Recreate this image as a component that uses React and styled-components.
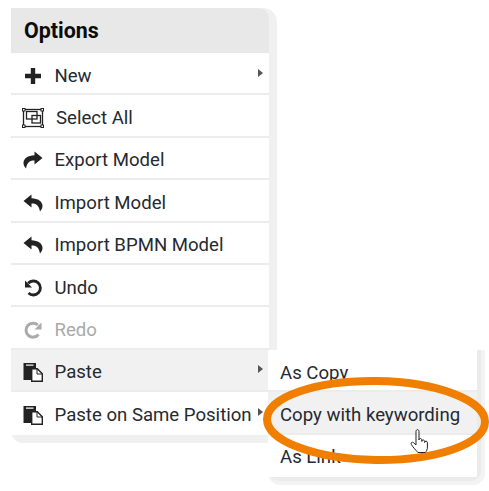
import React from "react";
import styled, { createGlobalStyle } from "styled-components";

const Global = createGlobalStyle`
  html, body { margin: 0; padding: 0; background: #fff; }
  body { font-family: Roboto, "Liberation Sans", sans-serif; }
`;

const Page = styled.div`
  position: relative;
  width: 489px;
  height: 491px;
  padding: 8px 0 0 11px;
  box-sizing: border-box;
  overflow: hidden;
`;

const Menu = styled.div`
  width: 258px;
  background: #fff;
  border-radius: 0 10px 8px 8px;
  box-shadow: 4px 4px 0 4px #f0f0f0;
`;

const Header = styled.div`
  height: 45px;
  display: flex;
  align-items: center;
  padding-left: 13px;
  background: #e8e8e8;
  border-radius: 0 10px 0 0;
  font-size: 21.4px;
  font-weight: 700;
  color: #0c0c0c;
`;

const Row = styled.div`
  position: relative;
  height: 42.4px;
  box-sizing: border-box;
  display: flex;
  align-items: center;
  padding-top: 5px;
  border-bottom: 2px solid ${(p) => (p.$last ? "transparent" : "#ececec")};
  background: ${(p) => (p.$active ? "#f1f1f1" : "#fff")};
  color: ${(p) => (p.$disabled ? "#a9a9a9" : "#252a31")};
  font-size: 18.6px;
`;

const IconSlot = styled.span`
  width: ${(p) => (p.$wide ? "45px" : "43.5px")};
  padding-left: 12px;
  box-sizing: border-box;
  display: flex;
  align-items: center;
  flex: none;
`;

const Caret = styled.span`
  position: absolute;
  right: 6px;
  top: 50%;
  margin-top: -4.500px;
  width: 0;
  height: 0;
  border-left: 5.500px solid #555;
  border-top: 4.500px solid transparent;
  border-bottom: 4.500px solid transparent;
`;

const SubMenu = styled.div`
  position: absolute;
  left: 268px;
  top: 350px;
  width: 209px;
  background: #fff;
  border-radius: 0 0 8px 8px;
  box-shadow: 2px 2px 0 2px #ebebeb, 4px 4px 0 4px #f3f3f3;
`;

const SubRow = styled.div`
  height: 42.4px;
  box-sizing: border-box;
  display: flex;
  align-items: center;
  padding: 5px 0 0 12px;
  border-bottom: 2px solid ${(p) => (p.$last ? "transparent" : "#ececec")};
  background: ${(p) => (p.$active ? "#f1f1f1" : "#fff")};
  color: #252a31;
  font-size: 18.6px;
`;

const Overlay = styled.svg`
  position: absolute;
  left: 0;
  top: 0;
  pointer-events: none;
`;

const Plus = () => (
  <svg width="18" height="18" viewBox="0 0 18 18" style={{ marginLeft: 1 }}>
    <path d="M6.800 1h4.400v5.800H17v4.400h-5.800V17H6.800v-5.800H1V6.800h5.800z" fill="#222" />
  </svg>
);

const SelectAll = () => (
  <svg width="22" height="20" viewBox="0 0 22 20" style={{ marginLeft: -1 }}>
    <rect x="1.500" y="1.500" width="19" height="17" fill="none" stroke="#222" strokeWidth="1.300" />
    <rect x="0.500" y="0.500" width="2.500" height="2.500" fill="#fff" stroke="#222" />
    <rect x="19" y="0.500" width="2.500" height="2.500" fill="#fff" stroke="#222" />
    <rect x="0.500" y="17" width="2.500" height="2.500" fill="#fff" stroke="#222" />
    <rect x="19" y="17" width="2.500" height="2.500" fill="#fff" stroke="#222" />
    <rect x="4.500" y="3.500" width="10.500" height="7.500" fill="none" stroke="#222" strokeWidth="1.300" />
    <rect x="10" y="7.500" width="8.500" height="7.500" fill="none" stroke="#222" strokeWidth="1.300" />
  </svg>
);

const Share = () => (
  <svg width="20" height="20" viewBox="0 0 20 20">
    <path d="M11.500 1.500 19.500 8l-8 6.500V10.600C7 10.600 4.200 12 3 18.500 1.200 16.500.5 14.800.5 13c0-4.500 4.500-7.500 11-7.700z" fill="#222" />
  </svg>
);

const Reply = () => (
  <svg width="20" height="20" viewBox="0 0 20 20">
    <path d="M8.500 1.500.5 8l8 6.500V10.600c4.500 0 7.300 1.400 8.500 7.900 1.800-2 2.500-3.700 2.500-5.500 0-4.500-4.500-7.500-11-7.700z" fill="#222" />
  </svg>
);

const Undo = () => (
  <svg width="20" height="20" viewBox="0 0 20 20" fill="none">
    <path d="M5.500 15A7 7 0 1 0 5.200 5.300" stroke="#222" strokeWidth="2.800" />
    <path d="M2 2.500v7h7z" fill="#222" />
  </svg>
);

const Redo = () => (
  <svg width="20" height="20" viewBox="0 0 20 20" fill="none">
    <path d="M15.500 14.500A7 7 0 1 1 14.800 5" stroke="#aaa" strokeWidth="3" />
    <path d="M18.500 2.500v7h-7z" fill="#aaa" />
  </svg>
);

const Paste = () => (
  <svg width="20" height="20" viewBox="0 0 20 20">
    <path fillRule="evenodd" d="M0.500 1h12.500v6H8.500v11H0.500zM3 2.600v1.200h7.500V2.600z" fill="#222" />
    <path d="M8.700 6.700h5.600l5 5v7.600H8.700z" fill="#fff" stroke="#222" strokeWidth="1.400" />
    <path d="M14 6.700v5.300h5.300" fill="none" stroke="#222" strokeWidth="1" />
  </svg>
);

const items = [
  { label: "New", icon: <Plus />, caret: true },
  { label: "Select All", icon: <SelectAll />, wide: true },
  { label: "Export Model", icon: <Share /> },
  { label: "Import Model", icon: <Reply /> },
  { label: "Import BPMN Model", icon: <Reply /> },
  { label: "Undo", icon: <Undo /> },
  { label: "Redo", icon: <Redo />, disabled: true },
  { label: "Paste", icon: <Paste />, caret: true, active: true },
  { label: "Paste on Same Position", icon: <Paste />, caret: true, last: true },
];

export default function App() {
  return (
    <Page>
      <Global />
      <Menu>
        <Header>Options</Header>
        {items.map((it) => (
          <Row key={it.label} $active={it.active} $disabled={it.disabled} $last={it.last}>
            <IconSlot $wide={it.wide}>{it.icon}</IconSlot>
            {it.label}
            {it.caret && <Caret />}
          </Row>
        ))}
      </Menu>
      <SubMenu>
        <SubRow>As Copy</SubRow>
        <SubRow $active>Copy with keywording</SubRow>
        <SubRow $last>As Link</SubRow>
      </SubMenu>
      <Overlay width="489" height="491" viewBox="0 0 489 491">
        <ellipse cx="376" cy="420.500" rx="109" ry="39.500" fill="none" stroke="#f07f00" strokeWidth="8" transform="rotate(0.800 376 420.500)" />
        <path
          d="M416 431.500c0-2.500 3-2.500 3 0v8.500c0-2 2.800-2 2.800 0v1.500c0-2 2.800-2 2.800 0v1c0-1.800 2.800-1.800 2.800 0v4.500c0 2.500-.8 4-2 5.500h-7.500c-2-2.500-4.500-4.500-6.500-8-1-2 1-3 2.500-1.500l2.100 2z"
          fill="#fff"
          stroke="#222"
          strokeWidth="1"
        />
      </Overlay>
    </Page>
  );
}
